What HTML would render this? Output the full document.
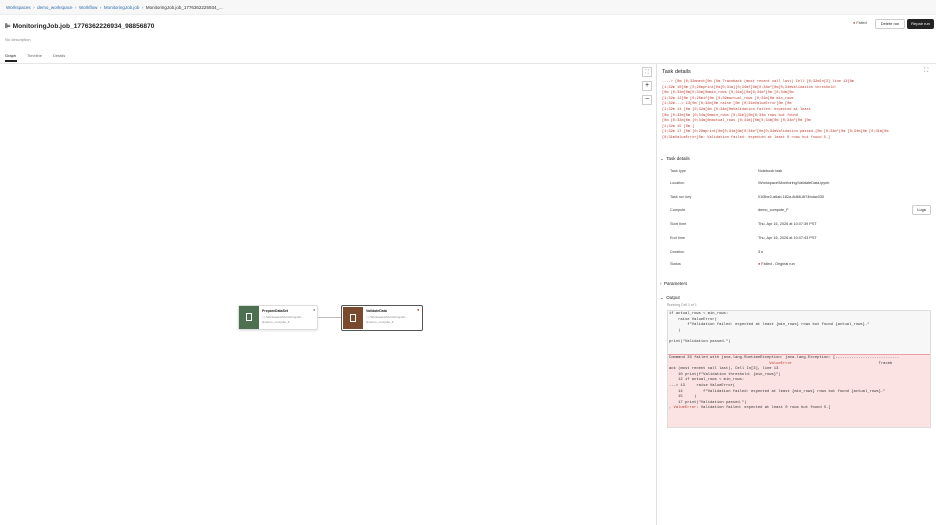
<!DOCTYPE html>
<html><head><meta charset="utf-8"><style>
*{margin:0;padding:0;box-sizing:border-box}
body{width:936px;height:525px;overflow:hidden;background:#fff;font-family:"Liberation Sans",sans-serif;color:#222;position:relative}
.a{position:absolute;white-space:nowrap}
.bc{left:0;top:0;width:936px;height:15px;background:#f7f7f7;border-bottom:1px solid #eee;font-size:4.5px;color:#2a6bb0;padding:5px 6px}
.log{font-family:"Liberation Mono",monospace;font-size:3.6px;color:#c0392b;line-height:5.6px;left:662px;top:80px}
.lbl{font-size:3.8px;color:#444;left:670px}
.val{font-size:3.8px;color:#333;left:758px}
.code{font-family:"Liberation Mono",monospace;font-size:3.8px;line-height:5.6px}
</style></head><body>
<div class="a bc">Workspaces &nbsp;›&nbsp; demo_workspace &nbsp;›&nbsp; Workflow &nbsp;›&nbsp; MonitoringJob.job &nbsp;›&nbsp; <span style="color:#333">MonitoringJob.job_1776362226934_...</span></div>
<div class="a" style="left:5px;top:22px;font-size:6.6px;font-weight:bold;color:#222">⊫ MonitoringJob.job_1776362226934_98856870</div>
<div class="a" style="left:5px;top:37px;font-size:4px;color:#888">No description</div>
<div class="a" style="left:853px;top:21px;font-size:3.8px;color:#444"><span style="color:#c0392b">●</span> Failed</div>
<div class="a" style="left:875px;top:19px;width:30px;height:10px;border:1px solid #ccc;border-radius:2px;font-size:4px;text-align:center;line-height:8px">Delete run</div>
<div class="a" style="left:907px;top:19px;width:27px;height:10px;background:#222;border-radius:2px;font-size:4px;color:#fff;text-align:center;line-height:10px">Repair run</div>
<div class="a" style="left:5px;top:53px;font-size:4px;color:#222">Graph</div>
<div class="a" style="left:5px;top:60px;width:12px;height:1.5px;background:#222"></div>
<div class="a" style="left:27px;top:53px;font-size:4px;color:#666">Timeline</div>
<div class="a" style="left:53px;top:53px;font-size:4px;color:#666">Details</div>
<div class="a" style="left:0;top:63px;width:936px;height:1px;background:#e6e6e6"></div>
<div class="a" style="left:656px;top:63px;width:1px;height:462px;background:#e0e0e0"></div>
<div class="a" style="left:642px;top:67px;width:10px;height:10px;border:1px solid #ccc;font-size:5px;text-align:center;line-height:8px;color:#888">⛶</div>
<div class="a" style="left:642px;top:81px;width:10px;height:10px;border:1px solid #ccc;font-size:7px;text-align:center;line-height:8px">+</div>
<div class="a" style="left:642px;top:95px;width:10px;height:10px;border:1px solid #ccc;font-size:7px;text-align:center;line-height:8px">−</div>
<!-- nodes -->
<div class="a" style="left:238px;top:305px;width:80px;height:25px;border:1px solid #ddd;border-radius:2px;background:#fff;box-shadow:0 1px 2px rgba(0,0,0,.1)"></div>
<div class="a" style="left:239px;top:306px;width:20px;height:23px;background:#4c7050"></div>
<div class="a" style="left:246px;top:313px;width:6px;height:8px;border:1px solid #fff"></div>
<div class="a" style="left:262px;top:309px;font-size:3.5px;font-weight:bold">PrepareDataSet</div>
<div class="a" style="left:262px;top:315px;font-size:3px;color:#888">▢ /Workspace/MonitoringJob...</div>
<div class="a" style="left:262px;top:320px;font-size:3px;color:#888">⊞ demo_compute_F</div>
<div class="a" style="left:313px;top:307px;font-size:4px;color:#888">●</div>
<div class="a" style="left:318px;top:317px;width:23px;height:1px;background:#bbb"></div>
<div class="a" style="left:341px;top:305px;width:82px;height:26px;border:1.5px solid #555;border-radius:2px;background:#fff"></div>
<div class="a" style="left:343px;top:307px;width:20px;height:22px;background:#7a4a2e"></div>
<div class="a" style="left:350px;top:314px;width:6px;height:8px;border:1px solid #fff"></div>
<div class="a" style="left:366px;top:309px;font-size:3.5px;font-weight:bold">ValidateData</div>
<div class="a" style="left:366px;top:315px;font-size:3px;color:#888">▢ /Workspace/MonitoringJob...</div>
<div class="a" style="left:366px;top:320px;font-size:3px;color:#888">⊞ demo_compute_F</div>
<div class="a" style="left:417px;top:307px;font-size:4px;color:#c0392b">●</div>
<!-- panel -->
<div class="a" style="left:662px;top:69px;font-size:5.5px;color:#222">Task details</div>
<div class="a" style="left:924px;top:68px;font-size:6px;color:#888">⛶</div>
<div class="a log">----&gt; [0m   [0;32mnext[0m [0m Traceback (most recent call last)  Cell [0;32mIn[3]  line 13[0m<br>[1;32m 10[0m  [0;28mprint[0m[0;31m][0;34mf[0m[0;34m"[0m[0;34mValidation threshold:<br>[0m [0;32m[0m[0;34m[0mmin_rows [0;31m}[0m[0;34m"[0m [0;34m[0m<br>[1;32m 12[0m [0;28mif[0m [0;39mactual_rows [0;31m[0m min_rows<br>[1;32m---&gt; 13[0m [0;32m[0m raise [0m [0;31mValueError[0m [0m<br>[1;32m 14 [0m  [0;32m[0m [0;34m[0mValidation failed: expected at least<br>[0m [0;32m[0m [0;34m[0mmin_rows [0;31m}[0m[0;34m rows but found<br>[0m [0;32m[0m [0;34m[0mactual_rows [0;31m}[0m[0;34m[0m [0;34m"[0m [0m<br>[1;32m 15 [0m ]<br>[1;32m 17 [0m [0;28mprint[0m[0;31m[0m[0;34m"[0m[0;34mValidation passed.[0m [0;34m"[0m [0;34m[0m [0;31m[0m<br>[0;31mValueError[0m: Validation failed: expected at least 0 rows but found 5.]</div>
<div class="a" style="left:660px;top:156px;font-size:4.5px">⌄ &nbsp;Task details</div>
<div class="a lbl" style="top:169px">Task type</div><div class="a val" style="top:169px">Notebook task</div>
<div class="a lbl" style="top:181px">Location</div><div class="a val" style="top:181px">/Workspace/Monitoring/ValidateData.ipynb</div>
<div class="a lbl" style="top:195px">Task run key</div><div class="a val" style="top:195px">01f3be2-a6ab-182a-8d66-8f74bdac030</div>
<div class="a lbl" style="top:208px">Compute</div><div class="a val" style="top:208px">demo_compute_F</div>
<div class="a" style="left:912px;top:205px;width:19px;height:10px;border:1px solid #ccc;border-radius:2px;font-size:4px;text-align:center;line-height:8px">Logs</div>
<div class="a lbl" style="top:222px">Start time</div><div class="a val" style="top:222px">Thu, Apr 16, 2026 at 10:07:39 PST</div>
<div class="a lbl" style="top:236px">End time</div><div class="a val" style="top:236px">Thu, Apr 16, 2026 at 10:07:43 PST</div>
<div class="a lbl" style="top:250px">Duration</div><div class="a val" style="top:250px">3 s</div>
<div class="a lbl" style="top:262px">Status</div><div class="a val" style="top:262px"><span style="color:#c0392b">●</span> Failed - Original run</div>
<div class="a" style="left:660px;top:281px;font-size:4.5px">› &nbsp;Parameters</div>
<div class="a" style="left:660px;top:295px;font-size:4.5px">⌄ &nbsp;Output</div>
<div class="a" style="left:667px;top:303px;font-size:3.5px;color:#888">Running Cell 1 of 1</div>
<div class="a" style="left:667px;top:310px;width:264px;height:118px;border:1px solid #ddd;background:#f7f7f7"></div>
<div class="a code" style="left:669px;top:312px;color:#333">if actual_rows &lt; min_rows:<br>&nbsp;&nbsp;&nbsp;&nbsp;raise ValueError(<br>&nbsp;&nbsp;&nbsp;&nbsp;&nbsp;&nbsp;&nbsp;&nbsp;f"Validation failed: expected at least {min_rows} rows but found {actual_rows}."<br>&nbsp;&nbsp;&nbsp;&nbsp;)<br><br>print("Validation passed.")</div>
<div class="a" style="left:668px;top:354px;width:262px;height:73px;background:#fbe3e3;border-top:1px solid #e8a0a0"></div>
<div class="a code" style="left:669px;top:356px;color:#333">Command 33 failed with java.lang.RuntimeException: java.lang.Exception: [----------------------------<br><span style="color:#c0392b">&nbsp;&nbsp;&nbsp;&nbsp;&nbsp;&nbsp;&nbsp;&nbsp;&nbsp;&nbsp;&nbsp;&nbsp;&nbsp;&nbsp;&nbsp;&nbsp;&nbsp;&nbsp;&nbsp;&nbsp;&nbsp;&nbsp;&nbsp;&nbsp;&nbsp;&nbsp;&nbsp;&nbsp;&nbsp;&nbsp;&nbsp;&nbsp;&nbsp;&nbsp;&nbsp;&nbsp;&nbsp;&nbsp;&nbsp;&nbsp;&nbsp;&nbsp;&nbsp;&nbsp;ValueError</span>&nbsp;&nbsp;&nbsp;&nbsp;&nbsp;&nbsp;&nbsp;&nbsp;&nbsp;&nbsp;&nbsp;&nbsp;&nbsp;&nbsp;&nbsp;&nbsp;&nbsp;&nbsp;&nbsp;&nbsp;&nbsp;&nbsp;&nbsp;&nbsp;&nbsp;&nbsp;&nbsp;&nbsp;&nbsp;&nbsp;&nbsp;&nbsp;&nbsp;&nbsp;&nbsp;&nbsp;&nbsp;&nbsp;Traceb<br>ack (most recent call last), Cell In[3], line 13<br>&nbsp;&nbsp;&nbsp;&nbsp;10 print(f"Validation threshold: {min_rows}")<br>&nbsp;&nbsp;&nbsp;&nbsp;12 if actual_rows &lt; min_rows:<br>---&gt; 13&nbsp;&nbsp;&nbsp;&nbsp;&nbsp;raise ValueError(<br>&nbsp;&nbsp;&nbsp;&nbsp;14&nbsp;&nbsp;&nbsp;&nbsp;&nbsp;&nbsp;&nbsp;&nbsp;&nbsp;f"Validation failed: expected at least {min_rows} rows but found {actual_rows}."<br>&nbsp;&nbsp;&nbsp;&nbsp;15&nbsp;&nbsp;&nbsp;&nbsp;&nbsp;)<br>&nbsp;&nbsp;&nbsp;&nbsp;17 print("Validation passed.")<br><span style="color:#c0392b">, ValueError</span>: Validation failed: expected at least 0 rows but found 5.]</div>
</body></html>
